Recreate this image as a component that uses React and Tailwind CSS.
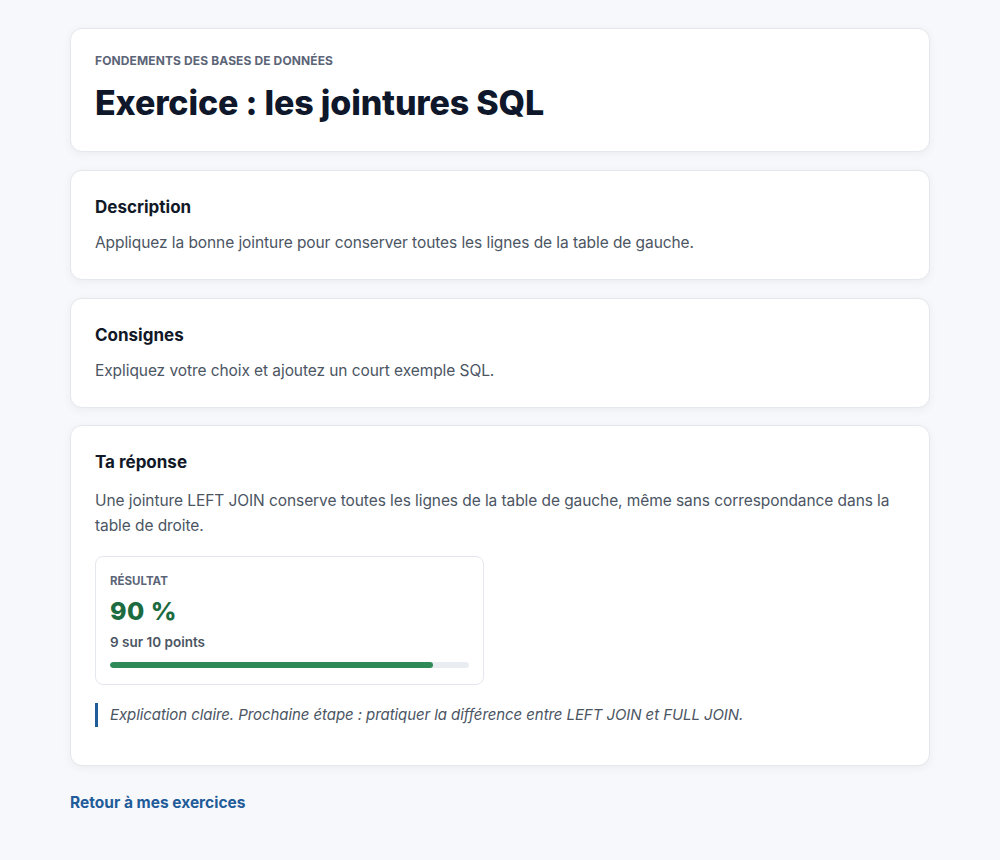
import React from 'react';

const Card = ({ children, className = '' }) => (
  <section
    className={`bg-white border border-[#e4e7ec] rounded-xl shadow-[0_2px_10px_rgba(15,23,42,0.05)] px-6 pt-6 ${className}`}
  >
    {children}
  </section>
);

const SectionTitle = ({ children }) => (
  <h2 className="text-[17px] leading-6 font-bold text-[#111827] mb-3">{children}</h2>
);

export default function App() {
  return (
    <div
      className="min-h-screen bg-[#f7f8fb] pt-7 pb-10"
      style={{ fontFamily: 'Inter, "Noto Sans", sans-serif' }}
    >
      <div className="w-[860px] mx-auto flex flex-col gap-[18px]">
        {/* Header */}
        <Card className="pb-6">
          <p className="text-[12px] leading-4 font-bold uppercase tracking-[0.01em] text-[#5b6577] mb-[10px]">
            Fondements des bases de données
          </p>
          <h1 className="text-[34px] leading-[48px] font-extrabold tracking-[-0.005em] text-[#0f172a]">
            Exercice : les jointures SQL
          </h1>
        </Card>

        <Card className="pb-6">
          <SectionTitle>Description</SectionTitle>
          <p className="text-[15.5px] leading-6 tracking-[-0.005em] text-[#4b5563]">
            Appliquez la bonne jointure pour conserver toutes les lignes de la table de gauche.
          </p>
        </Card>

        <Card className="pb-6">
          <SectionTitle>Consignes</SectionTitle>
          <p className="text-[15.5px] leading-6 tracking-[-0.005em] text-[#4b5563]">
            Expliquez votre choix et ajoutez un court exemple SQL.
          </p>
        </Card>

        <Card className="pb-[38px] -mt-px">
          <SectionTitle>Ta réponse</SectionTitle>
          <p className="text-[15.5px] leading-[25px] tracking-[-0.005em] text-[#4b5563] mt-[14px]">
            Une jointure LEFT JOIN conserve toutes les lignes de la table de gauche, même sans correspondance dans la table de droite.
          </p>

          {/* Result */}
          <div className="mt-[18px] w-[389px] border border-[#e4e7ec] rounded-lg px-3.5 py-4">
            <p className="text-[11.5px] leading-4 font-bold uppercase text-[#5b6577]">Résultat</p>
            <p className="mt-1.5 text-[25px] leading-8 font-extrabold tracking-[0.02em] text-[#1d6b40]">90 %</p>
            <p className="mt-[5px] text-[13.5px] leading-5 font-semibold text-[#4b5563]">9 sur 10 points</p>
            <div className="mt-2.5 h-1.5 rounded-full bg-[#e9ecf1] overflow-hidden">
              <div className="h-full rounded-full bg-[#2f8a57]" style={{ width: '90%' }} />
            </div>
          </div>

          <blockquote className="mt-[18px] border-l-[3px] border-[#1f5c99] pl-3 text-[15px] leading-6 italic tracking-[-0.005em] text-[#4b5563]">
            Explication claire. Prochaine étape : pratiquer la différence entre LEFT JOIN et FULL JOIN.
          </blockquote>
        </Card>

        <a href="#" className="mt-[7px] self-start text-[15.5px] leading-6 font-bold text-[#1f5c99]">
          Retour à mes exercices
        </a>
      </div>
    </div>
  );
}
